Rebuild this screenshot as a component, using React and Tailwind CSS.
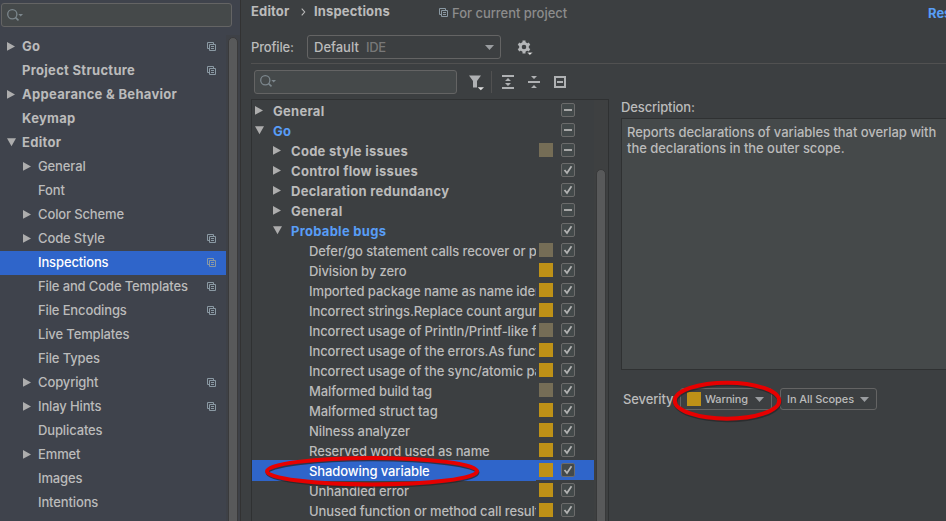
import React from "react";

function Arrow({ open }) {
  return (
    <svg width="9" height="9" viewBox="0 0 9 9" fill="#adadad" className="shrink-0">
      {open ? <path d="M0 .3H9L4.5 8.3Z" /> : <path d="M0 0L8 4.4L0 8.8Z" />}
    </svg>
  );
}

function Copy() {
  return (
    <svg width="9" height="9" viewBox="0 0 9 9" fill="none" stroke="#8a99a3" className="-mt-px shrink-0">
      <path d="M2 6.5H.5V.5H6.5V2" />
      <path d="M2.5 2.5H8.5V8.5H2.5Z M4 4.5H7 M4 6.5H7" />
    </svg>
  );
}

function SearchIcon() {
  return (
    <svg width="17" height="13" viewBox="0 0 17 13" className="shrink-0">
      <circle cx="5.3" cy="5.3" r="4.6" fill="none" stroke="#7c878d" strokeWidth="1.3" />
      <path d="M8.6 8.6L11.5 11.4" stroke="#7c878d" strokeWidth="1.5" />
      <path d="M11.3 5H16L13.7 7.6Z" fill="#7c878d" />
    </svg>
  );
}

function Caret() {
  return (
    <svg width="9" height="5" viewBox="0 0 9 5" fill="#9a9da0" className="shrink-0">
      <path d="M0 0H9L4.5 5Z" />
    </svg>
  );
}

const settings = [
  { t: "Go", top: true, a: "c", copy: true },
  { t: "Project Structure", top: true, copy: true },
  { t: "Appearance & Behavior", top: true, a: "c" },
  { t: "Keymap", top: true },
  { t: "Editor", top: true, a: "o" },
  { t: "General", a: "c" },
  { t: "Font" },
  { t: "Color Scheme", a: "c" },
  { t: "Code Style", a: "c", copy: true },
  { t: "Inspections", copy: true, sel: true },
  { t: "File and Code Templates", copy: true },
  { t: "File Encodings", copy: true },
  { t: "Live Templates" },
  { t: "File Types" },
  { t: "Copyright", a: "c", copy: true },
  { t: "Inlay Hints", a: "c", copy: true },
  { t: "Duplicates" },
  { t: "Emmet", a: "c" },
  { t: "Images" },
  { t: "Intentions" },
];

const inspections = [
  { t: "General", lvl: 0, a: "c", mixed: true },
  { t: "Go", lvl: 0, a: "o", mixed: true },
  { t: "Code style issues", lvl: 1, a: "c", mixed: true, sev: "weak" },
  { t: "Control flow issues", lvl: 1, a: "c" },
  { t: "Declaration redundancy", lvl: 1, a: "c" },
  { t: "General", lvl: 1, a: "c", mixed: true },
  { t: "Probable bugs", lvl: 1, a: "o" },
  { t: "Defer/go statement calls recover or panic", lvl: 2, sev: "weak" },
  { t: "Division by zero", lvl: 2, sev: "warn" },
  { t: "Imported package name as name identifier", lvl: 2, sev: "warn" },
  { t: "Incorrect strings.Replace count argument", lvl: 2, sev: "warn" },
  { t: "Incorrect usage of Println/Printf-like function", lvl: 2, sev: "weak" },
  { t: "Incorrect usage of the errors.As function", lvl: 2, sev: "warn" },
  { t: "Incorrect usage of the sync/atomic package", lvl: 2, sev: "warn" },
  { t: "Malformed build tag", lvl: 2, sev: "weak" },
  { t: "Malformed struct tag", lvl: 2, sev: "warn" },
  { t: "Nilness analyzer", lvl: 2, sev: "warn" },
  { t: "Reserved word used as name", lvl: 2, sev: "warn" },
  { t: "Shadowing variable", lvl: 2, sev: "warn", sel: true },
  { t: "Unhandled error", lvl: 2, sev: "warn" },
  { t: "Unused function or method call result", lvl: 2, sev: "warn" },
];

function SettingRow({ r }) {
  return (
    <div className={`flex h-6 shrink-0 items-center pr-[10px] ${r.top ? "pl-[7px]" : "pl-[23px]"} ${r.sel ? "bg-[#2f65ca] text-white" : ""}`}>
      <div className="-mt-px flex w-[15px] shrink-0">{r.a && <Arrow open={r.a === "o"} />}</div>
      <span className={`-mt-[2px] flex-1 whitespace-nowrap ${r.top ? "font-bold tracking-[0.3px]" : "font-medium tracking-[-0.13px]"}`}>{r.t}</span>
      {r.copy && <Copy />}
    </div>
  );
}

function Check({ mixed }) {
  return (
    <svg width="14" height="14" viewBox="0 0 14 14" className="shrink-0" fill="none">
      <rect x=".5" y=".5" width="13" height="13" rx="1.5" fill="#43494a" stroke="#6b6b6b" />
      {mixed ? <path d="M3 7H11" stroke="#a7a7a7" strokeWidth="2" /> : <path d="M3.5 7L6 10L10.5 3.3" stroke="#b4b4b4" strokeWidth="1.7" />}
    </svg>
  );
}

function InspectionRow({ r }) {
  const indent = r.lvl === 0 ? "pl-[3px]" : r.lvl === 1 ? "pl-[21px]" : "pl-[39px]";
  const tone = r.sel ? "text-white" : r.a === "o" ? "text-[#589df6]" : "";
  return (
    <div className={`flex h-5 shrink-0 items-center ${r.sel ? "bg-[#2f65ca]" : ""}`}>
      <div className={`mt-px flex h-[21px] w-[284px] shrink-0 items-center overflow-hidden ${indent} ${r.sel ? "bg-[#2f65ca]" : ""}`}>
        <div className="flex w-[18px] shrink-0">{r.a && <Arrow open={r.a === "o"} />}</div>
        <span className={`whitespace-nowrap ${tone} ${r.lvl < 2 ? "font-bold tracking-[0.28px]" : "font-medium tracking-[-0.09px]"}`}>{r.t}</span>
      </div>
      <div className={`ml-[3px] mr-2 size-[14px] shrink-0 ${r.sev === "warn" ? "bg-[#be9117]" : r.sev === "weak" ? "bg-[#756d56]" : ""}`} />
      <Check mixed={r.mixed} />
    </div>
  );
}

export default function App() {
  return (
    <div className="relative flex h-[521px] w-[946px] overflow-hidden bg-[#3c3f41] font-['Inter',sans-serif] text-[13px] font-medium leading-4 text-[#bbbbbb]">
      <aside className="flex w-[241px] shrink-0 flex-col border-r border-[#323232] bg-[#3f434c]">
        <div className="ml-px mt-[3px] flex h-6 w-[231px] shrink-0 items-center rounded-[3px] border border-[#646464] bg-[#45494a] pl-[5px]">
          <SearchIcon />
        </div>
        <div className="mt-2 flex min-h-0 flex-1">
          <div className="flex w-[226px] flex-col overflow-hidden">
            {settings.map((r) => <SettingRow key={r.t} r={r} />)}
          </div>
          <div className="flex-1 bg-[#3e4147] pl-[2px] pt-[2px]">
            <div className="h-[500px] w-[10px] rounded-t-[5px] border border-[#3a3a3b] bg-[#58595a]" />
          </div>
        </div>
      </aside>

      <main className="flex w-[705px] shrink-0 flex-col pl-[10px]">
        <div className="flex h-[35px] items-start">
          <div className="flex pt-[3px] font-bold">
            <span className="w-[51px] tracking-[0.15px]">Editor</span>
            <svg width="5" height="8" viewBox="0 0 5 8" fill="none" stroke="#bbbbbb" strokeWidth="1.1" className="-ml-px mt-[5px]"><path d="M.7 .7L3.7 4L.7 7.3" /></svg>
            <span className="ml-2 w-[75px] tracking-[0.15px]">Inspections</span>
          </div>
          <div className="ml-[50px] flex items-center gap-1 pt-[5px] text-[#8c8c8c]">
            <Copy />
            <span className="tracking-[-0.03px]">For current project</span>
          </div>
          <span className="ml-auto w-[18px] pt-[5px] font-bold text-[#589df6]">Reset</span>
        </div>
        <div className="flex h-[29px] w-full items-start border-b border-[#515151]">
          <span className="w-[56px] pt-1 tracking-[-0.15px]">Profile:</span>
          <div className="flex h-6 w-[194px] items-center rounded-[3px] border border-[#646464] pl-[6px] pr-[6px]">
            <span className="w-[43px]">Default</span>
            <span className="ml-[9px] flex-1 tracking-[-0.3px] text-[#787878]">IDE</span>
            <Caret />
          </div>
          <svg width="17" height="17" viewBox="0 0 17 17" className="ml-[16px] mt-[4px]">
            <g fill="none" stroke="#b4b6b8">
              <circle cx="7" cy="8" r="3.6" strokeWidth="2.6" />
              <path d="M7 1.6V4M7 12V14.4M1.45 4.8L3.5 6M10.5 10L12.55 11.2M1.45 11.2L3.5 10M10.5 6L12.55 4.8" strokeWidth="3" />
            </g>
            <path d="M9.8 13.3H16L12.9 16.3Z" fill="#e2e2e2" stroke="#3c3f41" strokeWidth=".6" />
          </svg>
        </div>
        <div className="flex h-[35px] items-center pl-[3px]">
          <div className="flex h-6 w-[203px] items-center rounded-[3px] border border-[#646464] bg-[#45494a] pl-[5px]">
            <SearchIcon />
          </div>
          <svg width="110" height="22" viewBox="0 0 110 22" className="ml-3">
            <path d="M0 4.5H12L8 10V16.5H4V10Z" fill="#afb1b3" />
            <path d="M8.7 16.3H15L11.8 19.3Z" fill="#e2e2e2" />
            <path d="M22.5 0V22" stroke="#515151" />
            <g fill="#afb1b3">
              <path d="M33 4H45V6H33ZM33 16H45V18H33ZM36 10L39 7L42 10ZM36 12L39 15L42 12Z" />
              <path d="M59 10H71V12H59ZM62 5H68L65 8ZM62 17L65 14L68 17Z" />
            </g>
            <path d="M86 6H96V16H86ZM88 11H94" fill="none" stroke="#afb1b3" strokeWidth="2" />
          </svg>
        </div>
        <div className="flex min-h-0 flex-1">
          <div className="flex w-[358px] shrink-0 overflow-hidden border-x border-t border-[#2f3132]">
            <div className="flex w-[342px] shrink-0 flex-col">
              {inspections.map((r, i) => <InspectionRow key={i} r={r} />)}
            </div>
            <div className="flex-1 bg-[#3e4041] pl-[2px] pt-[69px]">
              <div className="h-[400px] w-[10px] rounded-t-[5px] border border-[#38393a] bg-[#58595a]" />
            </div>
          </div>
          <div className="flex min-w-0 flex-1 flex-col pl-3">
            <div className="h-[19px] shrink-0 tracking-[-0.13px]">Description:</div>
            <div className="h-[252px] shrink-0 whitespace-pre border-y border-l border-[#2f3132] bg-[#45494a] pl-[5px] pt-[5px] tracking-[-0.05px]">
              {"Reports declarations of variables that overlap with\nthe declarations in the outer scope."}
            </div>
            <div className="mt-[18px] flex h-[22px] items-center pl-[2px]">
              <span className="w-[57px] shrink-0 tracking-[-0.1px]">Severity:</span>
              <div className="flex h-[22px] w-[92px] shrink-0 items-center rounded-[3px] border border-[#646464] pl-[6px] pr-[7px] text-[11px]">
                <div className="mr-1 size-[14px] shrink-0 bg-[#be9117]" />
                <span className="flex-1 tracking-[-0.15px]">Warning</span>
                <Caret />
              </div>
              <div className="ml-2 flex h-[22px] w-[97px] shrink-0 items-center rounded-[3px] border border-[#646464] pl-[6px] pr-[7px] text-[11px]">
                <span className="flex-1 whitespace-nowrap tracking-[-0.08px]">In All Scopes</span>
                <Caret />
              </div>
            </div>
          </div>
        </div>
      </main>

      <svg width="946" height="521" viewBox="0 0 946 521" fill="none" className="pointer-events-none absolute inset-0">
        <g stroke="#252829" strokeOpacity=".75" strokeWidth="4">
          <ellipse cx="372.5" cy="472.5" rx="105" ry="13.2" />
          <ellipse cx="727.5" cy="402.2" rx="52.2" ry="18" />
        </g>
        <g stroke="#e60000" strokeWidth="4">
          <ellipse cx="372" cy="471.2" rx="105" ry="13.2" />
          <ellipse cx="727" cy="400.7" rx="52.2" ry="18" />
        </g>
      </svg>
    </div>
  );
}
